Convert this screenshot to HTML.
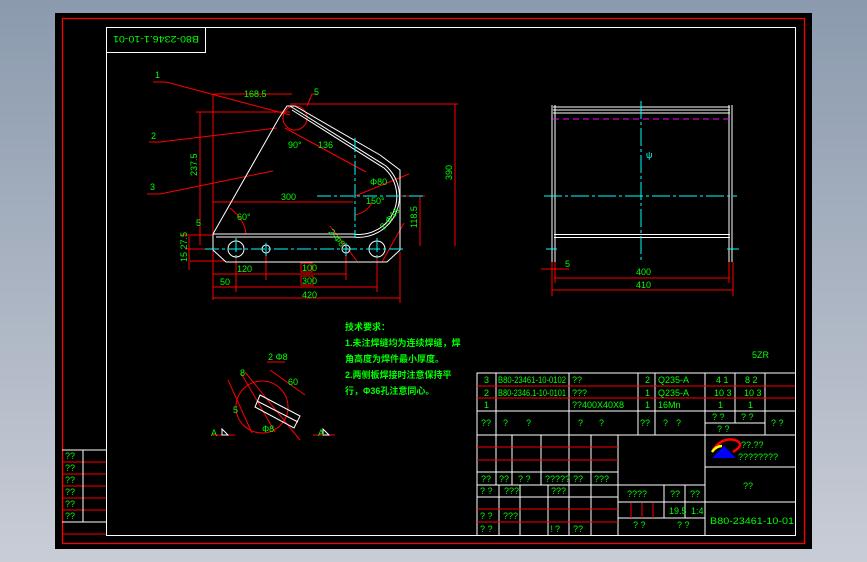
<!DOCTYPE html>
<html><head><meta charset="utf-8"><style>
html,body{margin:0;padding:0;width:867px;height:562px;overflow:hidden;background:linear-gradient(#8b9aae,#c9cdd6);}
svg{position:absolute;left:0;top:0}
text{font-family:"Liberation Sans","Noto Sans CJK SC",sans-serif;fill:#00ff00;font-size:9px}
</style></head><body>
<svg width="867" height="562" viewBox="0 0 867 562">
<rect x="55" y="13" width="757" height="536" fill="#000"/>
<rect x="62.5" y="18.5" width="742" height="525" fill="none" stroke="#f00" stroke-width="1.3"/>
<rect x="106.5" y="27.5" width="689" height="508" fill="none" stroke="#fff" stroke-width="1"/>
<rect x="106.5" y="27.5" width="99" height="25" fill="none" stroke="#fff"/>
<text x="156" y="45" font-size="13" text-anchor="middle" transform="rotate(180 156 40.5)" textLength="86" lengthAdjust="spacingAndGlyphs">B80-2346.1-10-01</text>

<!-- main view -->
<g fill="none" stroke-width="1">
<g stroke="#f00">
<polyline points="153,82 166,82 290,115"/><polyline points="149,142 160,142 277,128"/><polyline points="147,194 160,194 273,171"/>
<line x1="213" y1="94" x2="292" y2="94"/><line x1="213" y1="94" x2="213" y2="300"/>
<line x1="196" y1="112" x2="290" y2="112"/><line x1="200" y1="112" x2="200" y2="245"/>
<line x1="290" y1="104" x2="458" y2="104"/><line x1="455" y1="104" x2="455" y2="246"/>
<line x1="401" y1="196" x2="425" y2="196"/><line x1="420" y1="196" x2="420" y2="246"/>
<line x1="213" y1="202" x2="353" y2="202"/><line x1="180" y1="235" x2="213" y2="235"/>
<line x1="185" y1="249" x2="205" y2="249"/><line x1="190" y1="261" x2="226" y2="261"/><line x1="189" y1="236" x2="189" y2="270"/>
<line x1="213" y1="274" x2="346" y2="274"/><line x1="213" y1="287" x2="377" y2="287"/><line x1="213" y1="298" x2="400" y2="298"/>
<line x1="266" y1="252" x2="266" y2="280"/><line x1="346" y1="252" x2="346" y2="280"/><line x1="236" y1="258" x2="236" y2="292"/><line x1="377" y1="258" x2="377" y2="292"/><line x1="400" y1="252" x2="400" y2="303"/>
<line x1="285" y1="128" x2="366" y2="172"/><line x1="330" y1="226" x2="357" y2="261"/><line x1="404" y1="223" x2="382" y2="262"/>
<line x1="355" y1="196" x2="409" y2="174"/>
<circle cx="295" cy="118" r="12"/><polyline points="307,106 312,94 317,94"/>
<path d="M230 208 Q245 220 246 234"/><path d="M355 215 Q368 212 372 202"/>
<rect x="301" y="263" width="11" height="9"/><rect x="301" y="276" width="12" height="9"/>
</g>
<g stroke="#fff">
<polyline points="213,234 279,118 287,106 295,106 380,155 400,170 400,250 387,262 226,262 213,250 213,234"/>
<line x1="213" y1="234" x2="353" y2="234"/><line x1="216" y1="237" x2="353" y2="237"/>
<path d="M353 234 A38 38 0 0 0 384 168 L292 110"/><path d="M353 237 A41 41 0 0 0 386 166 L290 106"/>
<circle cx="236" cy="249" r="8"/><circle cx="266" cy="249" r="4"/><circle cx="346" cy="249" r="4"/><circle cx="377" cy="249" r="8"/>
</g>
<g stroke="#0ff" stroke-dasharray="14,3,3,3">
<line x1="205" y1="249" x2="405" y2="249"/><line x1="355" y1="138" x2="355" y2="238"/><line x1="317" y1="196" x2="425" y2="196"/>
<line x1="236" y1="238" x2="236" y2="260"/><line x1="377" y1="238" x2="377" y2="260"/><line x1="266" y1="243" x2="266" y2="256"/><line x1="346" y1="243" x2="346" y2="256"/>
</g>
</g>
<g font-size="7">
<text x="155" y="78">1</text><text x="151" y="139">2</text><text x="150" y="190">3</text>
<text x="244" y="97">168.5</text><text x="314" y="95">5</text><text x="288" y="148">90°</text><text x="318" y="148">136</text>
<text x="281" y="200">300</text><text x="237" y="220">60°</text><text x="370" y="185">Φ80</text><text x="366" y="204">150°</text>
<text x="237" y="272">120</text><text x="302" y="271">100</text><text x="302" y="284">300</text><text x="220" y="285">50</text><text x="302" y="298">420</text>
<text x="197" y="176" transform="rotate(-90 197 176)">237.5</text><text x="452" y="180" transform="rotate(-90 452 180)">390</text>
<text x="417" y="228" transform="rotate(-90 417 228)">118.5</text><text x="196" y="226">5</text>
<text x="187" y="262" transform="rotate(-90 187 262)">15 27.5</text>
<text x="328" y="232" transform="rotate(50 328 232)">2-Φ8</text><text x="384" y="230" transform="rotate(-50 384 230)">2-Φ16</text>
</g>

<!-- side view -->
<g fill="none">
<g stroke="#fff"><line x1="552" y1="105" x2="552" y2="262"/><line x1="555" y1="105" x2="555" y2="262"/><line x1="729" y1="105" x2="729" y2="262"/><line x1="732" y1="105" x2="732" y2="262"/>
<line x1="553" y1="107" x2="730" y2="107"/><line x1="553" y1="110" x2="730" y2="110"/><line x1="553" y1="113" x2="730" y2="113"/>
<line x1="554" y1="234.5" x2="730" y2="234.5"/><line x1="554" y1="237.5" x2="730" y2="237.5"/></g>
<line x1="553" y1="119" x2="730" y2="119" stroke="#f0f" stroke-dasharray="6,4"/>
<g stroke="#0ff" stroke-dasharray="18,3,3,3"><line x1="641" y1="101" x2="641" y2="263"/><line x1="544" y1="196" x2="737" y2="196"/></g>
<line x1="546" y1="249" x2="557" y2="249" stroke="#0ff"/><line x1="727" y1="249" x2="739" y2="249" stroke="#0ff"/>
<g stroke="#f00"><line x1="554" y1="278" x2="729" y2="278"/><line x1="552" y1="290" x2="733" y2="290"/><line x1="552" y1="262" x2="552" y2="296"/><line x1="555" y1="262" x2="555" y2="283"/><line x1="729" y1="262" x2="729" y2="283"/><line x1="733" y1="262" x2="733" y2="296"/><line x1="541" y1="269" x2="569" y2="269"/></g>
</g>
<text x="646" y="158" fill="#0ff" style="fill:#0ff" font-size="10">ψ</text>
<text x="565" y="267" font-size="7">5</text><text x="636" y="275" font-size="7">400</text><text x="636" y="288" font-size="7">410</text>

<!-- section -->
<g fill="none" stroke="#f00">
<circle cx="262" cy="407" r="26"/><line x1="245" y1="372" x2="300" y2="440"/><line x1="270" y1="370" x2="305" y2="395"/>
<line x1="241" y1="373" x2="275" y2="432"/><line x1="228" y1="380" x2="252" y2="433"/>
<line x1="212" y1="435" x2="235" y2="435"/><line x1="313" y1="435" x2="335" y2="435"/><line x1="267" y1="362" x2="285" y2="362"/>
<polygon points="222,435 222,429 228,435" stroke="#fff"/><polygon points="323,435 323,429 329,435" stroke="#fff"/>
</g>
<g stroke="#fff" fill="none"><polygon points="260,395 300,416 294,428 255,407"/><line x1="257" y1="401" x2="298" y2="422"/></g>
<text x="268" y="360" font-size="6">2 Φ8</text><text x="288" y="385" font-size="7">60</text><text x="240" y="376" font-size="7">8</text><text x="233" y="413" font-size="7">5</text><text x="262" y="432" font-size="7">Φ8</text>
<text x="211" y="436" font-size="7">A</text><text x="318" y="436" font-size="7">A</text>

<g font-size="10" style="font-weight:bold">
<text x="345" y="330">技术要求：</text>
<text x="345" y="346">1.未注焊缝均为连续焊缝，焊</text>
<text x="345" y="362">角高度为焊件最小厚度。</text>
<text x="345" y="378">2.两侧板焊接时注意保持平</text>
<text x="345" y="394">行，Φ36孔注意同心。</text>
</g>
<text x="752" y="358" font-size="8">5ZR</text>

<!-- title block -->
<g stroke="#fff" fill="none">
<polyline points="477,535 477,373 795,373"/>
<line x1="477" y1="411" x2="795" y2="411"/><line x1="477" y1="435" x2="795" y2="435"/>
<line x1="496" y1="373" x2="496" y2="435"/><line x1="569" y1="373" x2="569" y2="435"/><line x1="638" y1="373" x2="638" y2="435"/><line x1="655" y1="373" x2="655" y2="435"/><line x1="705" y1="373" x2="705" y2="435"/><line x1="735" y1="373" x2="735" y2="423"/><line x1="765" y1="373" x2="765" y2="435"/>
<line x1="705" y1="423" x2="765" y2="423"/>
<line x1="477" y1="472" x2="618" y2="472"/><line x1="477" y1="485" x2="705" y2="485"/><line x1="477" y1="497" x2="618" y2="497"/>
<line x1="496" y1="435" x2="496" y2="485"/><line x1="512" y1="435" x2="512" y2="485"/><line x1="541" y1="435" x2="541" y2="485"/><line x1="569" y1="435" x2="569" y2="535"/><line x1="591" y1="435" x2="591" y2="535"/><line x1="618" y1="435" x2="618" y2="535"/>
<line x1="499" y1="485" x2="499" y2="535"/><line x1="520" y1="485" x2="520" y2="535"/><line x1="548" y1="485" x2="548" y2="535"/>
<line x1="618" y1="502" x2="705" y2="502"/><line x1="618" y1="518" x2="705" y2="518"/><line x1="664" y1="485" x2="664" y2="518"/><line x1="685" y1="485" x2="685" y2="518"/>
<line x1="705" y1="435" x2="705" y2="535"/><line x1="705" y1="467" x2="795" y2="467"/><line x1="705" y1="502" x2="795" y2="502"/>
</g>
<g stroke="#f00">
<line x1="477" y1="386" x2="795" y2="386"/><line x1="477" y1="398" x2="795" y2="398"/>
<line x1="477" y1="447" x2="618" y2="447"/><line x1="477" y1="460" x2="618" y2="460"/>
<line x1="477" y1="509" x2="618" y2="509"/><line x1="477" y1="522" x2="618" y2="522"/>
<line x1="631" y1="503" x2="631" y2="518"/><line x1="642" y1="503" x2="642" y2="518"/><line x1="653" y1="503" x2="653" y2="518"/>
</g>
<g font-size="9">
<text x="484" y="383">3</text><text x="498" y="383" textLength="68" lengthAdjust="spacingAndGlyphs">B80-23461-10-0102</text><text x="572" y="383">??</text><text x="645" y="383">2</text><text x="658" y="383">Q235-A</text><text x="716" y="383">4 1</text><text x="745" y="383">8 2</text>
<text x="484" y="396">2</text><text x="498" y="396" textLength="68" lengthAdjust="spacingAndGlyphs">B80-2346.1-10-0101</text><text x="572" y="396">???</text><text x="645" y="396">1</text><text x="658" y="396">Q235-A</text><text x="714" y="396">10 3</text><text x="744" y="396">10 3</text>
<text x="484" y="408">1</text><text x="572" y="408">??400X40X8</text><text x="645" y="408">1</text><text x="658" y="408">16Mn</text><text x="718" y="408">1</text><text x="748" y="408">1</text>
<text x="481" y="426" font-size="8">??</text><text x="503" y="426" font-size="8">?</text><text x="526" y="426" font-size="8">?</text><text x="578" y="426" font-size="8">?</text><text x="599" y="426" font-size="8">?</text><text x="640" y="426" font-size="8">??</text><text x="663" y="426" font-size="8">?</text><text x="676" y="426" font-size="8">?</text><text x="712" y="420" font-size="8">? ?</text><text x="741" y="420" font-size="8">? ?</text><text x="717" y="432" font-size="8">?  ?</text><text x="771" y="426" font-size="8">? ?</text>
<g font-size="7"><text x="481" y="482">??</text><text x="499" y="482">??</text><text x="518" y="482">? ?</text><text x="545" y="482">?????</text><text x="573" y="482">??</text><text x="594" y="482">???</text>
<text x="480" y="494">? ?</text><text x="504" y="494">???</text><text x="551" y="494">???</text>
<text x="480" y="519">? ?</text><text x="503" y="519">???</text><text x="480" y="532">? ?</text><text x="550" y="532">! ?</text><text x="573" y="532">??</text>
<text x="627" y="497">????</text><text x="670" y="497">??</text><text x="690" y="497">??</text><text x="633" y="528">?   ?</text><text x="677" y="528">?  ?</text></g>
<text x="669" y="514">19.5</text><text x="691" y="514">1:4</text>
<text x="741" y="448" font-size="8">??.??</text><text x="738" y="460" font-size="8">????????</text>
<text x="743" y="489">??</text>
<text x="710" y="524" font-size="12" textLength="84" lengthAdjust="spacingAndGlyphs">B80-23461-10-01</text>
</g>
<path d="M713 450 Q722 437 735 440 Q746 444 733 452" fill="none" stroke="#f00" stroke-width="2.5"/>
<path d="M712 452 Q716 446 722 446" fill="none" stroke="#ff0" stroke-width="2.5"/>
<polygon points="712,458 724,446 736,458" fill="#00f"/>

<!-- left small table -->
<g stroke="#f00"><line x1="62" y1="462" x2="106" y2="462"/><line x1="62" y1="474" x2="106" y2="474"/><line x1="62" y1="486" x2="106" y2="486"/><line x1="62" y1="498" x2="106" y2="498"/><line x1="62" y1="510" x2="106" y2="510"/><line x1="62" y1="534" x2="106" y2="534"/></g>
<g stroke="#fff"><line x1="62" y1="450" x2="106" y2="450"/><line x1="62" y1="522" x2="106" y2="522"/><line x1="83" y1="450" x2="83" y2="522"/></g>
<g font-size="8"><text x="65" y="459">??</text><text x="65" y="471">??</text><text x="65" y="483">??</text><text x="65" y="495">??</text><text x="65" y="507">??</text><text x="65" y="519">??</text></g>
</svg>
</body></html>
